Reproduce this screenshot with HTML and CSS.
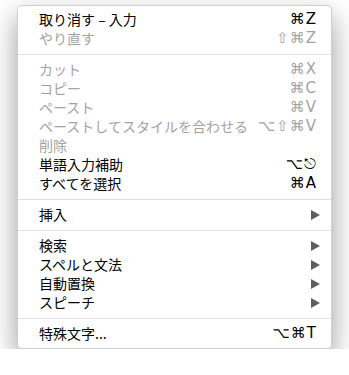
FILE: index.html
```html
<!DOCTYPE html>
<html lang="ja">
  <head>
    <meta charset="UTF-8" />
    <meta name="viewport" content="width=device-width, initial-scale=1.0" />
    <title>編集メニュー</title>
    <link rel="stylesheet" href="styles.css">
  </head>
  <body>
    <div class="menu">
      <div class="item"><span class="label">取り消す – 入力</span><span class="key">⌘Z</span></div>
      <div class="item off"><span class="label">やり直す</span><span class="key">⇧⌘Z</span></div>
      <div class="sep"></div>
      <div class="item off"><span class="label">カット</span><span class="key">⌘X</span></div>
      <div class="item off"><span class="label">コピー</span><span class="key">⌘C</span></div>
      <div class="item off"><span class="label">ペースト</span><span class="key">⌘V</span></div>
      <div class="item off"><span class="label">ペーストしてスタイルを合わせる</span><span class="key">⌥⇧⌘V</span></div>
      <div class="item off"><span class="label">削除</span></div>
      <div class="item"><span class="label">単語入力補助</span><span class="key">⌥⎋</span></div>
      <div class="item"><span class="label">すべてを選択</span><span class="key">⌘A</span></div>
      <div class="sep"></div>
      <div class="item"><span class="label">挿入</span><span class="arrow"></span></div>
      <div class="sep"></div>
      <div class="item"><span class="label">検索</span><span class="arrow"></span></div>
      <div class="item"><span class="label">スペルと文法</span><span class="arrow"></span></div>
      <div class="item"><span class="label">自動置換</span><span class="arrow"></span></div>
      <div class="item"><span class="label">スピーチ</span><span class="arrow"></span></div>
      <div class="sep"></div>
      <div class="item"><span class="label">特殊文字...</span><span class="key">⌥⌘T</span></div>
    </div>
  </body>
</html>
```

FILE: styles.css
```css
* {
  margin: 0;
  padding: 0;
  box-sizing: border-box;
}
body {
  background-color: #fff;
  font-family: "Noto Sans CJK JP", "Liberation Sans", sans-serif;
  color: #000;
}
.menu {
  margin: 5px 0 0 17px;
  width: 315px;
  padding: 4px 0 5px;
  background-color: #fff;
  border: 1px solid #cfcfcf;
  border-radius: 4px;
  box-shadow: 0 12px 28px rgba(0, 0, 0, 0.4);
}
.item {
  display: flex;
  align-items: center;
  justify-content: space-between;
  height: 19px;
  padding: 0 14px 0 21px;
  font-size: 14px;
  line-height: 19px;
}
.item.off {
  color: #a3a3a3;
}
.key {
  font-family: "DejaVu Sans", "Liberation Sans", sans-serif;
  font-size: 15px;
  letter-spacing: 1px;
}
.arrow {
  width: 0;
  height: 0;
  margin-right: -3px;
  border-top: 5px solid transparent;
  border-bottom: 5px solid transparent;
  border-left: 9px solid #5e5e5e;
}
.sep {
  height: 1px;
  margin: 6px 0 5px;
  background-color: #e0e0e0;
}
```
